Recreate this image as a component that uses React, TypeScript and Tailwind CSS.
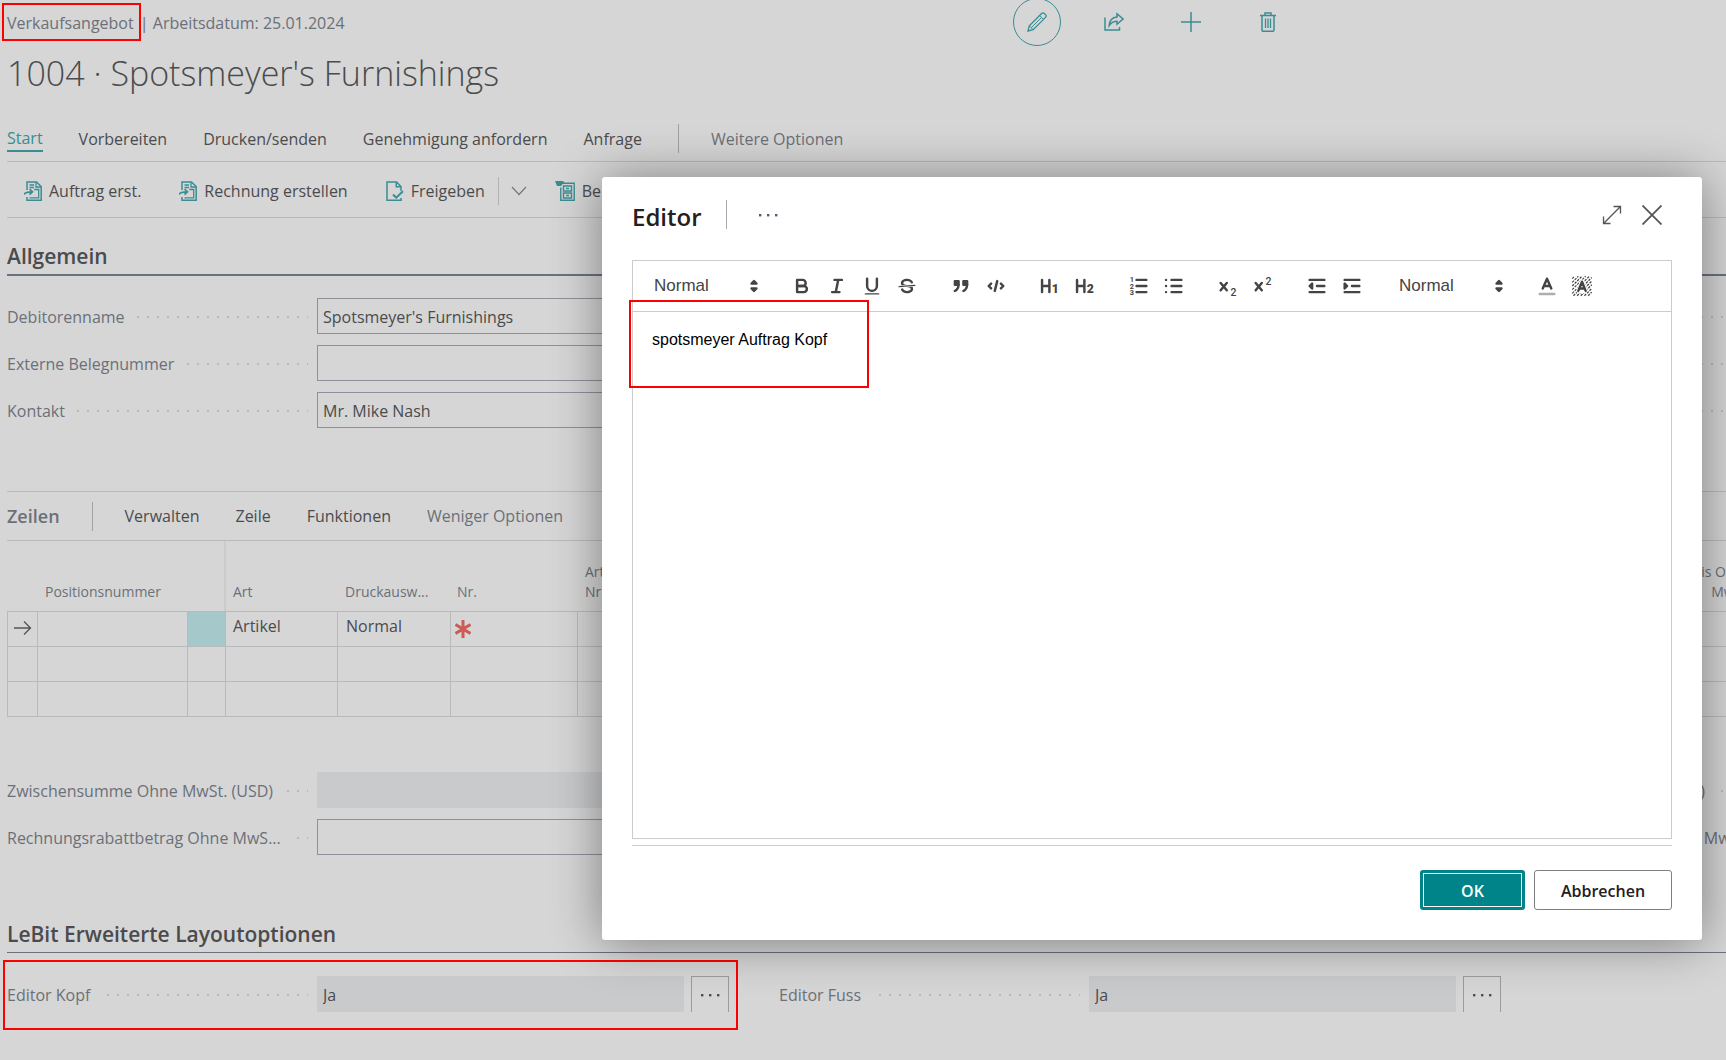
import React, { useId, useState } from "react";

type IconProps = { children: React.ReactNode; className?: string; box?: string };

function Icon({ children, className = "size-5", box = "0 0 20 20" }: IconProps) {
  return (
    <svg viewBox={box} className={className} fill="none" stroke="currentColor" strokeWidth="1.3" aria-hidden="true">
      {children}
    </svg>
  );
}

const PencilIcon = () => (
  <Icon>
    <path d="M1 19l1.3-5.2L14.6 1.5a2 2 0 0 1 2.8 0l1.1 1.1a2 2 0 0 1 0 2.8L6.2 17.7z" />
    <path d="M2.3 13.8l3.900 3.900M12.600 3.500l3.900 3.900M4.300 15.700L14.500 5.500" strokeWidth="1" />
  </Icon>
);
const ShareIcon = () => (
  <Icon>
    <path d="M1 5.500V18h14.500v-3" strokeWidth="1.500" />
    <path d="M13 1.800l6 5.200-6 5.200V9.300c-3.600 0-5.800 1.200-7.800 4.200.3-4.900 2.800-8 7.800-8.500z" strokeWidth="1.500" />
  </Icon>
);
const PlusIcon = () => (
  <Icon>
    <path d="M10 0v20M0 10h20" strokeWidth="1.500" />
  </Icon>
);
const TrashIcon = () => (
  <Icon>
    <path d="M2 3.500h16M7 3.500V1h6v2.500M4 3.500V18a1.200 1.200 0 0 0 1.200 1.200h9.600A1.200 1.200 0 0 0 16 18V3.500" strokeWidth="1.500" />
    <path d="M7.500 6.500v9.500M10 6.500v9.500M12.500 6.500v9.500" />
  </Icon>
);
const MakeDocIcon = () => (
  <Icon className="h-5 w-[18px]" box="0 0 18 20">
    <path d="M3 9V1h9.500l4.700 4.500V19.300H3V16" strokeWidth="1.500" />
    <path d="M12 1v5h5M5.500 4h4.500M5.500 6.500h4.500M5.500 16.800h9.200V8.500h-4.500" strokeWidth="1.300" />
    <path d="M0 13.500c1-2.200 2.800-2.700 8-2.700M5.500 8l3 2.800-3 2.900" strokeWidth="1.700" />
  </Icon>
);
const ReleaseIcon = () => (
  <Icon className="h-5 w-[18px]" box="0 0 18 20">
    <path d="M15 10V5.500L10.500 1H1v18.200h14V17M10.300 1v4.800H15" strokeWidth="1.500" />
    <path d="M7 13.500l3.200 3.200 6.800-6.500" strokeWidth="1.900" />
  </Icon>
);
const ArchiveIcon = () => (
  <Icon>
    <path d="M0 0h8l2 2.500H8L6 5H2z" fill="currentColor" stroke="none" />
    <path d="M7.500 2.300h11.700v17H5.800V6.500" strokeWidth="1.400" />
    <path d="M8.500 5h8v5h-8zM8.500 12h8v5h-8zM11 7.500h3M11 14.500h3" strokeWidth="1.400" />
  </Icon>
);
const Dots = ({ className }: { className?: string }) => (
  <svg viewBox="0 0 20 4" className={className} fill="currentColor" aria-hidden="true">
    <rect x="1" y="1" width="2.400" height="2.400" />
    <rect x="9" y="1" width="2.400" height="2.400" />
    <rect x="17" y="1" width="2.400" height="2.400" />
  </svg>
);

function Mark({ className }: { className: string }) {
  return <span aria-hidden="true" className={`pointer-events-none absolute border-2 border-[#ff0000] ${className}`} />;
}

const leader =
  "ml-3 h-0.5 min-w-0 flex-1 bg-[repeating-linear-gradient(to_left,#b9b9b9_0_1px,transparent_1px_9px,#b9b9b9_9px_10px)]";

type FieldProps = { label?: string; value?: string; readOnly?: boolean; more?: boolean; marked?: boolean };

function Field({ label = "", value = "", readOnly, more, marked }: FieldProps) {
  const id = useId();
  return (
    <div className="relative flex h-9 items-center">
      <div className="flex w-[301px] shrink-0 items-center pt-0.5">
        <label htmlFor={id} className="whitespace-nowrap text-[#6b7079]">
          {label}
        </label>
        <span className={leader} />
      </div>
      <input
        id={id}
        defaultValue={value}
        readOnly={readOnly}
        className={
          readOnly
            ? "ml-[9px] h-full min-w-0 flex-1 bg-[#c9cacc] px-1.5 pt-0.5 text-[#4b4b4d] outline-none"
            : "ml-[9px] h-full min-w-0 flex-1 border border-[#8d9199] bg-transparent px-[5px] pt-0.5 text-[#4b4b4d] outline-none"
        }
      />
      {more && (
        <button
          type="button"
          aria-label={`${label} bearbeiten`}
          className="ml-[7px] flex h-full w-[38px] items-center justify-center border border-b-0 border-[#9b9c9e] text-[#505050]"
        >
          <Dots className="h-1 w-5" />
        </button>
      )}
      {marked && <Mark className="-top-4 -right-[9px] -bottom-[18px] -left-1" />}
    </div>
  );
}

const columns = "grid grid-cols-[722px_722px_722px] gap-x-[50px] gap-y-[11px]";

function Toggle({ label, children }: { label: string; children: React.ReactNode }) {
  return (
    <button type="button" aria-label={label} className="flex h-[30px] w-[35px] items-center justify-center">
      <svg viewBox="0 0 18 18" className="size-[22px]" fill="none" stroke="#444" strokeWidth="2" strokeLinecap="round" strokeLinejoin="round">
        {children}
      </svg>
    </button>
  );
}

function Picker({ label, options }: { label: string; options: string[] }) {
  return (
    <div className="relative flex h-[30px] w-[122px] items-center">
      <select aria-label={label} className="h-full w-full appearance-none bg-transparent pl-[11px] font-['Liberation_Sans',sans-serif] text-[17px] text-[#444] outline-none">
        {options.map((o) => (
          <option key={o}>{o}</option>
        ))}
      </select>
      <svg viewBox="0 0 18 18" className="pointer-events-none absolute right-0 size-[22px]" fill="#444" stroke="#444" strokeWidth="2" strokeLinejoin="round" aria-hidden="true">
        <polygon points="7 11 9 13 11 11" />
        <polygon points="7 7 9 5 11 7" />
      </svg>
    </div>
  );
}

const digit = { fill: "#444", stroke: "none", fontFamily: "Roboto, sans-serif" } as const;

function EditorToolbar() {
  return (
    <div className="flex h-[51px] items-center gap-[19px] border-b border-[#ccc] pl-2.5">
      <Picker label="Absatzformat" options={["Normal", "Überschrift"]} />
      <div className="flex">
        <Toggle label="Fett">
          <path d="M5,4H9.500A2.500,2.500,0,0,1,9.500,9H5Z" />
          <path d="M5,9h5.500a2.500,2.500,0,0,1,0,5H5Z" />
        </Toggle>
        <Toggle label="Kursiv">
          <path d="M7,4H13M5,14H11M8,14L10,4" />
        </Toggle>
        <Toggle label="Unterstrichen">
          <path d="M5,3V9a4.012,4.012,0,0,0,4,4H9a4.012,4.012,0,0,0,4-4V3" />
          <rect x="3" y="15" width="12" height="1" rx="0.500" fill="#444" stroke="none" />
        </Toggle>
        <Toggle label="Durchgestrichen">
          <line x1="15.500" x2="2.500" y1="8.500" y2="9.500" strokeWidth="1" />
          <path stroke="none" fill="#444" d="M9.007,8C6.542,7.791,6,7.519,6,6.500,6,5.792,7.283,5,9,5c1.571,0,2.765.679,2.969,1.309a1,1,0,0,0,1.900-.617C13.356,4.106,11.354,3,9,3,6.200,3,4,4.538,4,6.500a3.200,3.200,0,0,0,.500,1.843Z" />
          <path stroke="none" fill="#444" d="M8.984,10C11.457,10.208,12,10.479,12,11.500c0,0.708-1.283,1.500-3,1.500-1.571,0-2.765-.679-2.969-1.309a1,1,0,1,0-1.900.617C4.644,13.894,6.646,15,9,15c2.800,0,5-1.538,5-3.500a3.200,3.200,0,0,0-.500-1.843Z" />
        </Toggle>
      </div>
      <div className="flex">
        <Toggle label="Zitat">
          <rect x="4" y="5" width="3" height="3" fill="#444" />
          <rect x="11" y="5" width="3" height="3" fill="#444" />
          <path fill="#444" d="M7,8c0,4.031-3,5-3,5" />
          <path fill="#444" d="M14,8c0,4.031-3,5-3,5" />
        </Toggle>
        <Toggle label="Code">
          <path d="M5 7L3 9l2 2M13 7l2 2-2 2M10 5L8 13" />
        </Toggle>
      </div>
      <div className="flex">
        <Toggle label="Überschrift 1">
          <path d="M2.500 4v10M8.500 4v10M2.500 9h6" />
          <text x="10.500" y="15" fontSize="10" fontWeight="900" {...digit}>1</text>
        </Toggle>
        <Toggle label="Überschrift 2">
          <path d="M2.500 4v10M8.500 4v10M2.500 9h6" />
          <text x="10.500" y="15" fontSize="10" fontWeight="900" {...digit}>2</text>
        </Toggle>
      </div>
      <div className="flex">
        <Toggle label="Nummerierte Liste">
          <path d="M7 4h8M7 9h8M7 14h8" />
          <text x="1.500" y="6" fontSize="6" fontWeight="700" {...digit}>1</text>
          <text x="1.500" y="11.300" fontSize="6" fontWeight="700" {...digit}>2</text>
          <text x="1.500" y="16.500" fontSize="6" fontWeight="700" {...digit}>3</text>
        </Toggle>
        <Toggle label="Aufzählung">
          <path d="M7 4h8M7 9h8M7 14h8M2.500 4h0M2.500 9h0M2.500 14h0" />
        </Toggle>
      </div>
      <div className="flex">
        <Toggle label="Tiefgestellt">
          <path d="M3 6.500l5 6M8 6.500l-5 6" />
          <text x="11" y="17" fontSize="8.500" fontWeight="500" {...digit}>2</text>
        </Toggle>
        <Toggle label="Hochgestellt">
          <path d="M3 6.500l5 6M8 6.500l-5 6" />
          <text x="11" y="8" fontSize="8.500" fontWeight="500" {...digit}>2</text>
        </Toggle>
      </div>
      <div className="flex">
        <Toggle label="Einzug verkleinern">
          <path d="M3 14h12M3 4h12M9 9h6" />
          <polygon fill="#444" points="5 7 5 11 3 9" />
        </Toggle>
        <Toggle label="Einzug vergrößern">
          <path d="M3 14h12M3 4h12M9 9h6" />
          <polygon fill="#444" points="3 7 3 11 5 9" />
        </Toggle>
      </div>
      <Picker label="Schriftgröße" options={["Normal", "Klein", "Groß"]} />
      <div className="flex">
        <Toggle label="Textfarbe">
          <path d="M3 15.500h12" stroke="#aeaeae" />
          <path d="M5.500 11L9 3l3.500 8M11.600 9H6.400" />
        </Toggle>
        <Toggle label="Hintergrundfarbe">
          <path
            d="M1 3l2-2M1 6l5-5M1 9l8-8M1 12l11-11M1 15l14-14M2 17l15-15M5 17l12-12M8 17l9-9M11 17l6-6M14 17l3-3"
            strokeWidth="1"
            strokeDasharray="2 0.900"
            strokeLinecap="butt"
          />
          <path d="M6 13L9 5.500l3 7.500z" fill="#fff" stroke="#fff" strokeWidth="3.400" />
          <path d="M6 13L9 5.500l3 7.500M11.200 11H6.800" />
        </Toggle>
      </div>
    </div>
  );
}

function EditorDialog() {
  const [text, setText] = useState("spotsmeyer Auftrag Kopf");
  return (
    <div role="dialog" aria-label="Editor" className="w-full max-w-[1100px] rounded-[3px] bg-white px-[30px] pb-[30px] shadow-[0_2px_50px_rgba(0,0,0,0.42)]">
      <div className="flex h-[83px] items-center pb-2">
        <h2 className="pt-1 text-[24px] leading-8 font-semibold text-[#212121]">Editor</h2>
        <span className="ml-6 h-[29px] w-px bg-[#a5a9b0]" />
        <button type="button" aria-label="Weitere Aktionen" className="ml-[27px] p-1 text-[#505c6d]">
          <Dots className="h-1 w-5" />
        </button>
        <button type="button" aria-label="Maximieren" className="ml-auto text-[#555]">
          <Icon className="size-5">
            <path d="M1.500 18.500l17-17M11.500 1.500h7v7M1.500 11.500v7h7" />
          </Icon>
        </button>
        <button type="button" aria-label="Schließen" className="mr-2.5 ml-5 text-[#555]">
          <Icon className="size-5">
            <path d="M0.500 0.500l19 19M19.500 0.500l-19 19" strokeWidth="1.800" />
          </Icon>
        </button>
      </div>
      <div className="border border-[#ccc]">
        <EditorToolbar />
        <div className="relative">
          <textarea
            aria-label="Text"
            value={text}
            spellCheck={false}
            onChange={(e) => setText(e.target.value)}
            className="block h-[526px] w-full resize-none px-[19px] py-4 font-['Liberation_Sans',sans-serif] text-[16px] leading-[23px] text-black outline-none"
          />
          <Mark className="-top-3 -left-1 h-[88px] w-[240px]" />
        </div>
      </div>
      <div className="mt-1.5 flex justify-end gap-[9px] border-t border-[#ccc] pt-6">
        <button type="button" className="h-10 w-[105px] rounded-[3px] border-[3px] border-[#008489] bg-[#008489] pt-0.5 text-[16px] font-semibold text-white ring-1 ring-white ring-inset">
          OK
        </button>
        <button type="button" className="h-10 w-[138px] rounded-[3px] border border-[#7f7f83] pt-0.5 text-[16px] font-semibold text-[#212121]">
          Abbrechen
        </button>
      </div>
    </div>
  );
}

const tabs = ["Vorbereiten", "Drucken/senden", "Genehmigung anfordern", "Anfrage"];

function Heading({ children, thick }: { children: string; thick?: boolean }) {
  return (
    <h2
      className={
        thick
          ? "flex h-[58px] items-end border-b-2 border-[#6b717d] pb-0.5 text-[21px] leading-8 font-semibold text-[#4b4b4d]"
          : "flex h-[58px] items-end border-b border-[#6b717d] pb-0.5 text-[21px] leading-8 font-semibold text-[#4b4b4d]"
      }
    >
      {children}
    </h2>
  );
}

const cell = "border-t border-r border-[#b9babc]";

function LinesTable() {
  return (
    <table className="w-[1752px] table-fixed border-separate border-spacing-0 border-b border-[#b9babc] text-left">
      <colgroup>
        <col className="w-[31px]" />
        <col className="w-[150px]" />
        <col className="w-[38px]" />
        <col className="w-[112px]" />
        <col className="w-[113px]" />
        <col className="w-[127px]" />
        <col className="w-[124px]" />
        <col />
        <col className="w-[130px]" />
      </colgroup>
      <thead className="text-[14px] leading-5 text-[#6b7079]">
        <tr className="h-[70px] [&>th]:pb-[9px] [&>th]:align-bottom [&>th]:font-normal">
          <th />
          <th className="px-[7px]">Positionsnummer</th>
          <th className="border-r-2 border-[#cbcbcb]" />
          <th className="px-[7px]">Art</th>
          <th className="px-[7px]">Druckausw...</th>
          <th className="px-1.5">Nr.</th>
          <th className="px-[7px]">Artikelreferenz-<br />Nr.</th>
          <th />
          <th className="px-2 text-right">VK-Preis Ohne MwSt.</th>
        </tr>
      </thead>
      <tbody className="text-[#4b4b4d]">
        <tr className="h-[35px] [&>td]:py-0 [&>td]:align-top [&>td]:leading-[29px]">
          <td className={`${cell} border-l`}>
            <Icon className="mt-2 ml-1.5 h-4 w-[18px] text-[#555]" box="0 0 18 16">
              <path d="M0 8h16.500M10 1.500L16.500 8 10 14.500" />
            </Icon>
          </td>
          <td className={cell} />
          <td className={`${cell} bg-[#a5c8ca]`} />
          <td className={`${cell} px-[7px]`}>Artikel</td>
          <td className={`${cell} px-2`}>Normal</td>
          <td className={cell}>
            <Icon className="mt-2 ml-1 h-[18px] w-4 text-[#cc5b55]" box="0 0 16 18">
              <path d="M8 0v18M0.500 4.500l15 9M15.500 4.500l-15 9" strokeWidth="3" />
            </Icon>
          </td>
          <td className={cell} />
          <td className={cell} />
          <td className={cell} />
        </tr>
        {[0, 1].map((r) => (
          <tr key={r} className="h-[35px]">
            <td className={`${cell} border-l`} />
            {Array.from({ length: 8 }, (_, i) => (
              <td key={i} className={cell} />
            ))}
          </tr>
        ))}
      </tbody>
    </table>
  );
}

export default function App() {
  return (
    <div className="relative min-h-screen overflow-hidden bg-[#d6d6d6] font-['Open_Sans',sans-serif] text-[16px] leading-6 text-[#4b4b4d]">
      <main className="pl-[7px]">
        <header>
          <div className="flex h-11 items-center">
            <p className="w-[58.5%] pt-0.5 text-[#6b7079]">
              <span className="relative mr-0.5">
                Verkaufsangebot
                <Mark className="-top-[9px] -right-[7px] -bottom-[7px] -left-[5px]" />
              </span>{" "}
              | Arbeitsdatum: 25.01.2024
            </p>
            <div className="flex items-center gap-[29px] text-[#3a8d92] [&>button]:flex [&>button]:size-12 [&>button]:items-center [&>button]:justify-center">
              <button type="button" aria-label="Bearbeiten" className="rounded-full border border-[#3a8d92]">
                <PencilIcon />
              </button>
              <button type="button" aria-label="Teilen"><ShareIcon /></button>
              <button type="button" aria-label="Neu"><PlusIcon /></button>
              <button type="button" aria-label="Löschen"><TrashIcon /></button>
            </div>
          </div>
          <h1 className="text-[34px] leading-[58px] font-light">1004 · Spotsmeyer's Furnishings</h1>
        </header>

        <nav className="flex h-[60px] items-center gap-9 border-b border-[#b9babc] pt-3.5">
          <button type="button" className="border-b-2 border-[#3a8d92] text-[#3a8d92]">Start</button>
          {tabs.map((t) => (
            <button type="button" key={t}>{t}</button>
          ))}
          <span className="h-[29px] w-px bg-[#9fa1a5]" />
          <button type="button" className="-ml-1 text-[#6b7079]">Weitere Optionen</button>
        </nav>

        <div className="flex h-14 items-center border-b border-[#b9babc] pt-0.5 pl-[17px] [&>button]:flex [&>button]:shrink-0 [&>button]:items-center [&>button]:gap-[7px] [&_svg]:text-[#3a8d92]">
          <button type="button"><MakeDocIcon />Auftrag erst.</button>
          <button type="button" className="ml-[38px]"><MakeDocIcon />Rechnung erstellen</button>
          <button type="button" className="ml-[38px]"><ReleaseIcon />Freigeben</button>
          <span className="ml-[13px] h-7 w-px bg-[#b0b1b3]" />
          <button type="button" aria-label="Weitere" className="ml-3">
            <svg viewBox="0 0 16 10" className="h-2.5 w-4" fill="none" stroke="#777" strokeWidth="1.200">
              <path d="M1 1l7 7.500L15 1" />
            </svg>
          </button>
          <button type="button" className="ml-7"><ArchiveIcon />Beleg</button>
        </div>

        <section>
          <Heading thick>Allgemein</Heading>
          <div className={`${columns} grid-flow-col grid-rows-3 pt-[22px]`}>
            <Field label="Debitorenname" value="Spotsmeyer's Furnishings" />
            <Field label="Externe Belegnummer" />
            <Field label="Kontakt" value="Mr. Mike Nash" />
            <div className="row-span-3" />
            <Field />
            <Field />
            <Field />
          </div>
        </section>

        <section className="mt-[63px]">
          <div className="flex h-[50px] items-center gap-9 border-y border-[#b9babc]">
            <h2 className="text-[18px] font-semibold text-[#6b7079]">Zeilen</h2>
            <span className="-mx-1 h-[29px] w-px bg-[#9fa1a5]" />
            <button type="button">Verwalten</button>
            <button type="button">Zeile</button>
            <button type="button">Funktionen</button>
            <button type="button" className="text-[#6b7079]">Weniger Optionen</button>
          </div>
          <LinesTable />
          <div className={`${columns} mt-[55px] grid-flow-col grid-rows-2`}>
            <Field label="Zwischensumme Ohne MwSt. (USD)" readOnly />
            <Field label="Rechnungsrabattbetrag Ohne MwS..." />
            <div className="row-span-2" />
            <Field label="Gesamt-MwSt. (USD)" readOnly />
            <Field label="Gesamtbetrag ohne MwSt." readOnly />
          </div>
        </section>

        <section className="mt-10">
          <Heading>LeBit Erweiterte Layoutoptionen</Heading>
          <div className={`${columns} pt-[23px]`}>
            <Field label="Editor Kopf" value="Ja" readOnly more marked />
            <Field label="Editor Fuss" value="Ja" readOnly more />
          </div>
        </section>
      </main>

      <div className="absolute inset-0 flex items-start justify-end pt-[177px] pr-6 pl-6">
        <EditorDialog />
      </div>
    </div>
  );
}
